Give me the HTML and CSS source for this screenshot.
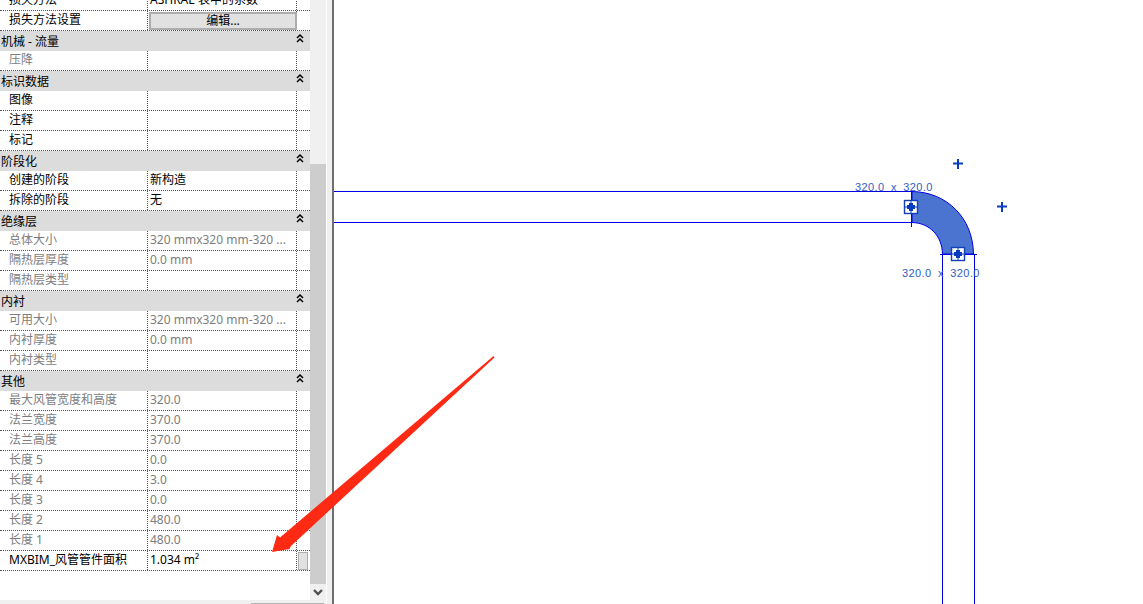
FILE: index.html
```html
<!DOCTYPE html>
<html lang="zh-CN">
<head>
    <meta charset="UTF-8">
    <meta name="viewport" content="width=device-width, initial-scale=1.0">
    <title>风管管件属性</title>
    <link rel="stylesheet" href="styles.css">
</head>
<body>
    <svg class="defs" width="0" height="0">
        <symbol id="fold" viewBox="0 0 8 9">
            <path d="M1 4 L4 1 L7 4M1 8 L4 5 L7 8" fill="none" stroke="#000" stroke-width="1.5"/>
        </symbol>
    </svg>
    <div class="page">
        <div class="panel">
            <div class="panel-body">
                <div class="props">
                    <div class="row"><div class="name">损失方法</div><div class="val">ASHRAE 表中的系数</div><div class="end"></div></div>
                    <div class="row"><div class="name">损失方法设置</div><div class="val val-btn"><button class="edit-btn">编辑...</button></div><div class="end"></div></div>

                    <div class="group"><span>机械 - 流量</span><svg class="fold"><use href="#fold"/></svg></div>
                    <div class="row dim"><div class="name">压降</div><div class="val"></div><div class="end"></div></div>

                    <div class="group"><span>标识数据</span><svg class="fold"><use href="#fold"/></svg></div>
                    <div class="row"><div class="name">图像</div><div class="val"></div><div class="end"></div></div>
                    <div class="row"><div class="name">注释</div><div class="val"></div><div class="end"></div></div>
                    <div class="row"><div class="name">标记</div><div class="val"></div><div class="end"></div></div>

                    <div class="group"><span>阶段化</span><svg class="fold"><use href="#fold"/></svg></div>
                    <div class="row"><div class="name">创建的阶段</div><div class="val">新构造</div><div class="end"></div></div>
                    <div class="row"><div class="name">拆除的阶段</div><div class="val">无</div><div class="end"></div></div>

                    <div class="group"><span>绝缘层</span><svg class="fold"><use href="#fold"/></svg></div>
                    <div class="row dim"><div class="name">总体大小</div><div class="val">320 mmx320 mm-320 ...</div><div class="end"></div></div>
                    <div class="row dim"><div class="name">隔热层厚度</div><div class="val">0.0 mm</div><div class="end"></div></div>
                    <div class="row dim"><div class="name">隔热层类型</div><div class="val"></div><div class="end"></div></div>

                    <div class="group"><span>内衬</span><svg class="fold"><use href="#fold"/></svg></div>
                    <div class="row dim"><div class="name">可用大小</div><div class="val">320 mmx320 mm-320 ...</div><div class="end"></div></div>
                    <div class="row dim"><div class="name">内衬厚度</div><div class="val">0.0 mm</div><div class="end"></div></div>
                    <div class="row dim"><div class="name">内衬类型</div><div class="val"></div><div class="end"></div></div>

                    <div class="group"><span>其他</span><svg class="fold"><use href="#fold"/></svg></div>
                    <div class="row dim"><div class="name">最大风管宽度和高度</div><div class="val">320.0</div><div class="end"></div></div>
                    <div class="row dim"><div class="name">法兰宽度</div><div class="val">370.0</div><div class="end"></div></div>
                    <div class="row dim"><div class="name">法兰高度</div><div class="val">370.0</div><div class="end"></div></div>
                    <div class="row dim"><div class="name">长度 5</div><div class="val">0.0</div><div class="end"></div></div>
                    <div class="row dim"><div class="name">长度 4</div><div class="val">3.0</div><div class="end"></div></div>
                    <div class="row dim"><div class="name">长度 3</div><div class="val">0.0</div><div class="end"></div></div>
                    <div class="row dim"><div class="name">长度 2</div><div class="val">480.0</div><div class="end"></div></div>
                    <div class="row dim"><div class="name">长度 1</div><div class="val">480.0</div><div class="end"></div></div>
                    <div class="row"><div class="name">MXBIM_风管管件面积</div><div class="val">1.034 m²</div><div class="end"><div class="mini-btn"></div></div></div>
                </div>
                <div class="scrollbar">
                    <div class="thumb"></div>
                    <div class="arrow-down">
                        <svg width="10" height="7" viewBox="0 0 10 7"><path d="M1 1 L5 5 L9 1" fill="none" stroke="#505050" stroke-width="2.4"/></svg>
                    </div>
                </div>
            </div>
            <div class="hscroll"><div class="hthumb"></div></div>
        </div>
        <div class="splitter"></div>

        <div class="canvas">
            <svg class="drawing" viewBox="334 0 809 604" width="809" height="604">
                <g fill="none" stroke="#0000e6" stroke-width="1" shape-rendering="crispEdges">
                    <path d="M334 191.5H912M334 222.5H912M911.5 191V227"/>
                    <path d="M942.5 604V254M974.5 604V254M940 254.5H977"/>
                </g>
                <path d="M912 191.5C947 192 973 218 973.5 254H942.5C942 236 930 223 912 222.5Z" fill="#4a74d0" stroke="#0000e6" stroke-width="1"/>

                <g class="grip">
                    <rect x="904.5" y="200.5" width="13" height="13" fill="#fff" stroke="#1240b8" stroke-width="1.4"/>
                    <path d="M911 200V214M904 207H918" stroke="#1240b8"/>
                    <path d="M911 203V211M907 207H915" stroke="#0a3cc0" stroke-width="4"/>
                </g>
                <g class="grip">
                    <rect x="951.5" y="247.5" width="13" height="13" fill="#fff" stroke="#1240b8" stroke-width="1.4"/>
                    <path d="M958 247V261M951 254H965" stroke="#1240b8"/>
                    <path d="M958 250V258M954 254H962" stroke="#0a3cc0" stroke-width="4"/>
                </g>

                <path d="M953 163.5H963M958 159V169" stroke="#0a3cc0" stroke-width="2" fill="none"/>
                <path d="M997 206.5H1007M1002 202V212" stroke="#0a3cc0" stroke-width="2" fill="none"/>

                <text class="dim-label" x="855" y="191">320.0 x 320.0</text>
                <text class="dim-label" x="902" y="277">320.0 x 320.0</text>
            </svg>
        </div>

        <svg class="pointer" viewBox="0 0 1143 604" width="1143" height="604">
            <path d="M493.5 356 L494.5 357.5 L291 546 L289.5 549 L272 552 L277 535 L280 537.5 Z" fill="#ff2a14"/>
        </svg>
    </div>
</body>
</html>
```

FILE: styles.css
```css
* {
    box-sizing: border-box;
}
html, body {
    margin: 0;
    height: 100%;
    overflow: hidden;
    background: #fff;
}
body {
    font-family: "Noto Sans", "Noto Sans CJK SC", sans-serif;
    font-size: 12px;
    color: #000;
}
.defs {
    position: absolute;
}
.page {
    position: relative;
    display: flex;
    width: 1143px;
    height: 604px;
    overflow: hidden;
}
.panel {
    display: flex;
    flex-direction: column;
    width: 326px;
    height: 604px;
}
.panel-body {
    display: flex;
    height: 600px;
}
.props {
    width: 310px;
    margin-top: -9px;
}
.row {
    display: flex;
    height: 20px;
    line-height: 18px;
    border-bottom: 1px dotted #555;
}
.name {
    width: 148px;
    padding-left: 9px;
    border-right: 1px dotted #555;
    white-space: nowrap;
}
.val {
    width: 149px;
    padding-left: 2px;
    border-right: 1px dotted #555;
    white-space: nowrap;
}
.val-btn {
    padding: 1px 0 1px 1px;
}
.end {
    flex: 1;
    padding: 1px 1px 0 1px;
}
.dim {
    color: #7d7d7d;
}
.group {
    display: flex;
    align-items: center;
    justify-content: space-between;
    height: 20px;
    padding-left: 1px;
    padding-bottom: 1px;
    background: #dcdcdc;
}
.fold {
    width: 8px;
    height: 9px;
    margin-right: 6px;
    margin-top: -4px;
}
.edit-btn {
    display: block;
    width: 148px;
    height: 18px;
    padding: 0 0 1px;
    font: inherit;
    line-height: 13px;
    background: #e1e1e1;
    border: 2px solid #adadad;
}
.mini-btn {
    width: 10px;
    height: 18px;
    background: #e1e1e1;
    border: 1px solid #adadad;
}
.scrollbar {
    display: flex;
    flex-direction: column;
    width: 16px;
    padding-top: 164px;
    background: #f0f0f0;
}
.thumb {
    height: 420px;
    background: #cdcdcd;
}
.arrow-down {
    display: flex;
    flex: 1;
    align-items: center;
    justify-content: center;
}
.hscroll {
    flex: 1;
    padding: 3px 2px 0 251px;
    background: #f0f0f0;
}
.hthumb {
    height: 1px;
    background: #b4b4b4;
}
.splitter {
    width: 8px;
    background: #f0f0f0;
    border-left: 1px solid #fff;
    border-right: 2px solid #6f6f6f;
}
.canvas {
    flex: 1;
}
.drawing {
    display: block;
}
.dim-label {
    font-family: "Liberation Sans", sans-serif;
    font-size: 11px;
    letter-spacing: 0.4px;
    word-spacing: 3px;
    fill: #2f5cc8;
}
.pointer {
    position: absolute;
    top: 0;
    left: 0;
    pointer-events: none;
}
```
